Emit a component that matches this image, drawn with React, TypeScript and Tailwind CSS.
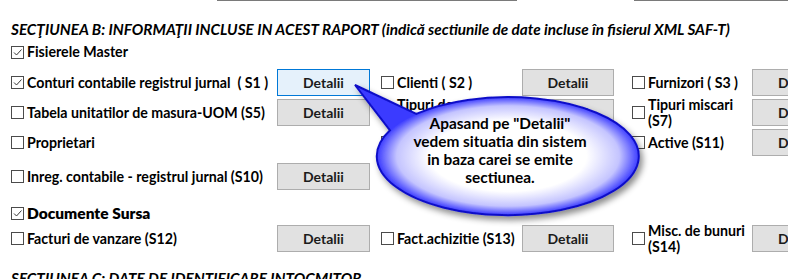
import React from "react";

const font = "font-['Lato','Open_Sans',sans-serif]";

function Box({ checked }: { checked?: boolean }) {
  return (
    <span className="inline-flex h-[13px] w-[13px] shrink-0 items-center justify-center border border-[#4b4b4b] bg-white">
      {checked && (
        <svg viewBox="0 0 11 11" className="h-[11px] w-[11px]">
          <path d="M2 5.5 L4.5 8 L9.5 2.5" fill="none" stroke="#3a3a3a" strokeWidth="1" />
        </svg>
      )}
    </span>
  );
}

function Item({ label, checked, width }: { label: React.ReactNode; checked?: boolean; width: string }) {
  return (
    <div className={`flex items-center gap-[3px] ${width}`}>
      <Box checked={checked} />
      <span className="whitespace-pre-wrap text-[14.2px] font-bold leading-[16px] text-black">{label}</span>
    </div>
  );
}

function Btn({ hover, width }: { hover?: boolean; width: string }) {
  return (
    <div
      className={`flex h-[27px] shrink-0 items-center justify-center border text-[14px] font-bold text-[#1b1b1b] ${width} ${
        hover ? "border-[#0078d7] bg-[#e5f1fb]" : "border-[#adadad] bg-[#e1e1e1]"
      }`}
    >
      Detalii
    </div>
  );
}

type Cell = { label: React.ReactNode; checked?: boolean; btn?: boolean; hover?: boolean };

function Row({ cells, mt }: { cells: (Cell | null)[]; mt: string }) {
  const widths = ["w-[266px] ml-[11px]", "w-[141px] ml-[11px]", "w-[120px] ml-[18px]"];
  const bw = ["w-[93px]", "w-[92px]", "w-[93px]"];
  return (
    <div className={`flex h-[27px] items-center ${mt}`}>
      {cells.map((c, i) => (
        <React.Fragment key={i}>
          <div className={`flex h-full shrink-0 items-center ${widths[i]}`}>
            {c && <Item label={c.label} checked={c.checked} width="w-full" />}
          </div>
          {c?.btn ? <Btn hover={c.hover} width={bw[i]} /> : <div className={`shrink-0 ${bw[i]}`} />}
        </React.Fragment>
      ))}
    </div>
  );
}

function Callout() {
  return (
    <div className="absolute left-[340px] top-[75px] h-[160px] w-[320px]">
      <svg width="320" height="160" className="absolute left-0 top-0">
        <defs>
          <radialGradient
            id="cg"
            cx="0"
            cy="0"
            r="1"
            gradientUnits="userSpaceOnUse"
            gradientTransform="translate(168 81) scale(131 59)"
          >
            <stop offset="0" stopColor="#ffffff" />
            <stop offset="0.6" stopColor="#ffffff" />
            <stop offset="0.85" stopColor="#c4c4ff" />
            <stop offset="1" stopColor="#3a3aff" />
          </radialGradient>
          <filter id="sh" x="-10%" y="-10%" width="130%" height="140%">
            <feDropShadow dx="3" dy="4" stdDeviation="3" floodColor="#000" floodOpacity="0.45" />
          </filter>
        </defs>
        <path
          d="M50 55.3 L15 10 L76.3 38.9 A131 59 0 1 1 50 55.3 Z"
          fill="url(#cg)"
          stroke="#1010c8"
          strokeWidth="2"
          filter="url(#sh)"
        />
      </svg>
      <div className="absolute left-[30px] top-[39px] w-[260px] text-center text-[15.4px] font-bold leading-[18px] text-black">
        <div>Apasand pe "Detalii"</div>
        <div>vedem situatia din sistem</div>
        <div>in baza carei se emite</div>
        <div>sectiunea.</div>
      </div>
    </div>
  );
}

export default function App() {
  return (
    <div className={`relative h-[279px] w-[788px] overflow-hidden bg-white ${font}`}>
      <div className="flex h-px">
        <div className="w-[217px]" />
        <div className="w-[300px] bg-[#7a7a7a]" />
        <div className="w-[117px]" />
        <div className="flex-1 bg-[#7a7a7a]" />
      </div>
      <div className="ml-[11px] mt-[18px] h-[20px] whitespace-nowrap text-[15.3px] font-bold italic leading-[20px] text-black">
        SECŢIUNEA B: INFORMAŢII INCLUSE IN ACEST RAPORT (indică sectiunile de date incluse în fisierul XML SAF-T)
      </div>
      <div className="ml-[11px] mt-[5px] h-[16px]">
        <Item label="Fisierele Master" checked width="" />
      </div>
      <Row
        mt="mt-[9px]"
        cells={[
          { label: "Conturi contabile registrul jurnal  ( S1 )", checked: true, btn: true, hover: true },
          { label: "Clienti ( S2 )", btn: true },
          { label: "Furnizori ( S3 )", btn: true },
        ]}
      />
      <Row
        mt="mt-[3px]"
        cells={[
          { label: "Tabela unitatilor de masura-UOM (S5)", btn: true },
          { label: "Tipuri de analiza (S6)", btn: true },
          { label: "Tipuri miscari (S7)", btn: true },
        ]}
      />
      <Row
        mt="mt-[3px]"
        cells={[{ label: "Proprietari" }, { label: "Produse (S8)", btn: true }, { label: "Active (S11)", btn: true }]}
      />
      <Row mt="mt-[7px]" cells={[{ label: "Inreg. contabile - registrul jurnal (S10)", btn: true }, null, null]} />
      <div className="ml-[11px] mt-[15px] flex h-[16px] items-center gap-[3px]">
        <Box checked />
        <span className="text-[15.5px] font-extrabold leading-[16px] text-black">Documente Sursa</span>
      </div>
      <Row
        mt="mt-[4px]"
        cells={[
          { label: "Facturi de vanzare (S12)", btn: true },
          { label: "Fact.achizitie (S13)", btn: true },
          { label: "Misc. de bunuri (S14)", btn: true },
        ]}
      />
      <div className="ml-[11px] mt-[16px] h-[20px] whitespace-nowrap text-[15.3px] font-bold italic leading-[20px] text-black">
        SECTIUNEA C: DATE DE IDENTIFICARE INTOCMITOR
      </div>
      <Callout />
    </div>
  );
}
